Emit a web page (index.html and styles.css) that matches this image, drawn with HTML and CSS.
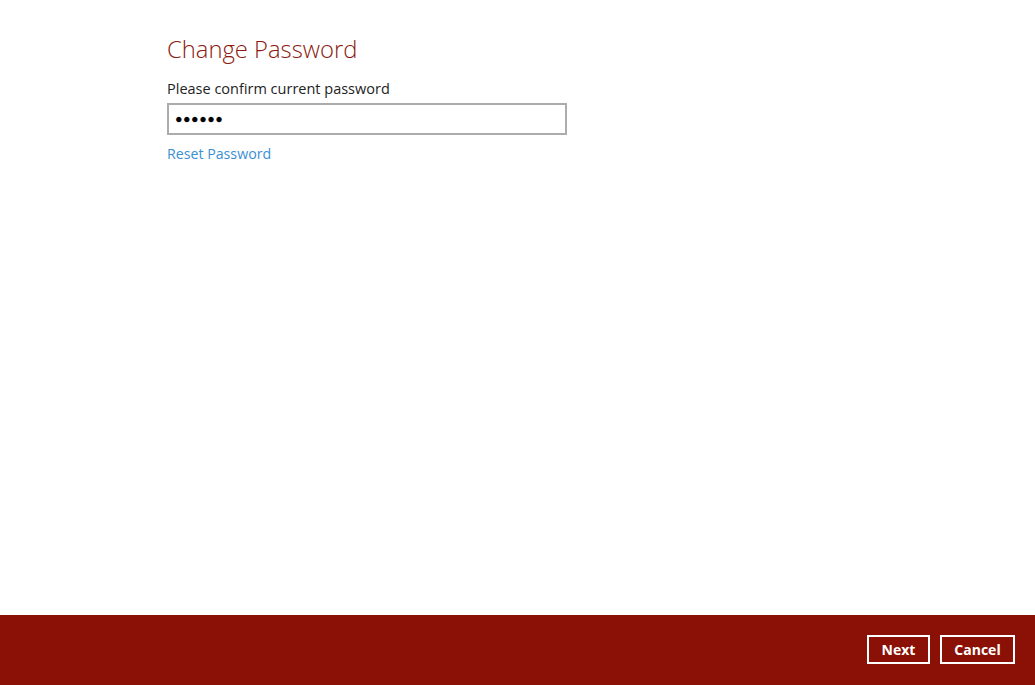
FILE: index.html
```html
<!DOCTYPE html>
<html>
<head>
<meta charset="utf-8">
<link rel="stylesheet" href="styles.css">
</head>
<body>
<div class="page">
  <main class="content">
    <h1 class="title">Change Password</h1>
    <label class="label">Please confirm current password</label>
    <div class="input">●●●●●●</div>
    <a class="link">Reset Password</a>
  </main>
  <footer class="footer">
    <button class="btn btn-next">Next</button>
    <button class="btn btn-cancel">Cancel</button>
  </footer>
</div>
</body>
</html>
```

FILE: styles.css
```css
html, body {
  margin: 0;
  padding: 0;
  background: #ffffff;
}
body {
  font-family: "Open Sans", "Noto Sans", sans-serif;
  width: 1035px;
  height: 685px;
  overflow: hidden;
}
.page {
  display: flex;
  flex-direction: column;
  height: 685px;
}
.content {
  flex: 1;
  padding: 33px 0 0 167px;
  display: flex;
  flex-direction: column;
  align-items: flex-start;
}
.title {
  margin: 0;
  font-size: 23.8px;
  font-weight: 300;
  color: #8b1a10;
  line-height: 32px;
}
.label {
  margin-top: 14px;
  font-size: 14.5px;
  color: #222;
  line-height: 20px;
}
.input {
  margin-top: 4px;
  box-sizing: border-box;
  width: 400px;
  height: 32px;
  border: 2px solid #acacac;
  padding: 0 6px;
  font-size: 12.5px;
  letter-spacing: 0.5px;
  line-height: 28px;
  color: #000;
}
.link {
  margin-top: 9px;
  font-size: 14.2px;
  color: #3b8fd3;
  line-height: 20px;
}
.footer {
  height: 70px;
  box-sizing: border-box;
  background: #8b1006;
  display: flex;
  justify-content: flex-end;
  align-items: flex-start;
  gap: 10px;
  padding: 20px 20px 0 0;
}
.btn {
  box-sizing: border-box;
  height: 29px;
  background: transparent;
  border: 2px solid #ffffff;
  color: #ffffff;
  font-family: "Open Sans", "Noto Sans", sans-serif;
  font-weight: 700;
  font-size: 14px;
  padding: 0;
}
.btn-next { width: 63px; }
.btn-cancel { width: 75px; }
```
